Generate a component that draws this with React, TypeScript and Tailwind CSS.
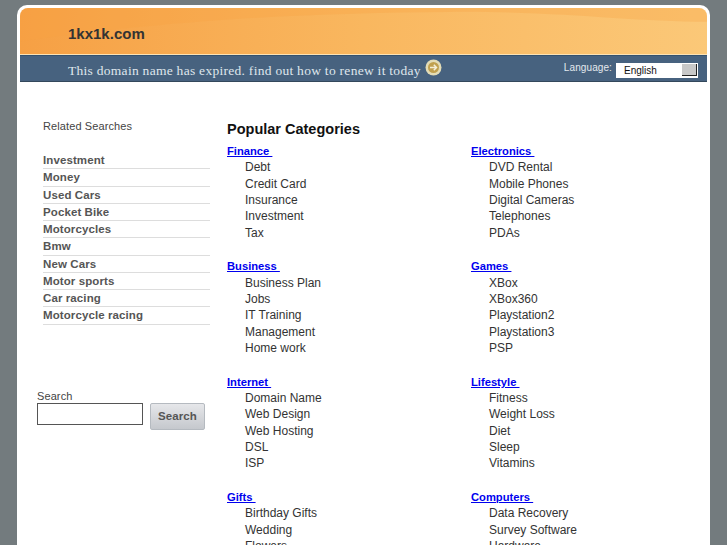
const related = [
  "Investment",
  "Money",
  "Used Cars",
  "Pocket Bike",
  "Motorcycles",
  "Bmw",
  "New Cars",
  "Motor sports",
  "Car racing",
  "Motorcycle racing",
];

const categories = [
  { title: "Finance", items: ["Debt", "Credit Card", "Insurance", "Investment", "Tax"] },
  { title: "Electronics", items: ["DVD Rental", "Mobile Phones", "Digital Cameras", "Telephones", "PDAs"] },
  { title: "Business", items: ["Business Plan", "Jobs", "IT Training", "Management", "Home work"] },
  { title: "Games", items: ["XBox", "XBox360", "Playstation2", "Playstation3", "PSP"] },
  { title: "Internet", items: ["Domain Name", "Web Design", "Web Hosting", "DSL", "ISP"] },
  { title: "Lifestyle", items: ["Fitness", "Weight Loss", "Diet", "Sleep", "Vitamins"] },
  { title: "Gifts", items: ["Birthday Gifts", "Wedding", "Flowers"] },
  { title: "Computers", items: ["Data Recovery", "Survey Software", "Hardware"] },
];

const Category = ({ title, items }: { title: string; items: string[] }) => (
  <div className="h-[115.4px]">
    <a href="#" className="block h-[16.2px] text-[11.2px] leading-[16.2px] font-bold text-[#0000ee] underline whitespace-pre">
      {title + " "}
    </a>
    <ul className="pl-[18px]">
      {items.map((item) => (
        <li key={item} className="h-[16.35px] text-[12px] leading-[16.35px] text-[#333]">
          {item}
        </li>
      ))}
    </ul>
  </div>
);

export default function App() {
  return (
    <div className="h-[545px] overflow-hidden bg-[#737b7e] pt-[5px] pl-[17px] font-['Liberation_Sans',Arial,sans-serif]">
      <div className="h-[560px] w-[693px] rounded-t-[10px] bg-white pt-[3px] px-[3px]">
        {/* header */}
        <div className="relative h-[47px] overflow-hidden rounded-t-[8px] border-b border-[#fde3b5] bg-gradient-to-r from-[#f6a044] via-[#f9b75f] to-[#fbc878]">
          <svg className="absolute inset-0 h-full w-full" viewBox="0 0 687 47" preserveAspectRatio="none">
            <path d="M0 0H687V14C610 14 540 3 430 4C300 5 170 10 0 34Z" fill="#f7a342" opacity="0.3" />
          </svg>
          <div className="relative pt-[16px] pl-[48px] text-[15px] leading-[20px] font-bold text-[#333]">1kx1k.com</div>
        </div>
        <div className="flex h-[27px] items-center justify-between border-t border-b border-t-[#34526f] border-b-[#33485c] bg-[#47627f] pl-[48px] pr-[9px]">
          <div className="flex items-center gap-[4px]">
            <span className="mt-[4px] font-['Liberation_Serif',serif] text-[13.5px] leading-[24px] tracking-[0.28px] text-[#dfe6ec]">
              This domain name has expired. find out how to renew it today
            </span>
            <svg width="17" height="17" viewBox="0 0 17 17" className="mt-[-3px]">
              <circle cx="8.5" cy="8.5" r="8" fill="#e3dcb6" />
              <circle cx="8.5" cy="8.5" r="5.5" fill="#c0a04f" />
              <path d="M5 8.5H11.5M8.8 5.8L11.5 8.5L8.8 11.2" fill="none" stroke="#f5efd8" strokeWidth="1.5" />
            </svg>
          </div>
          <div className="flex items-center gap-[4px]">
            <span className="mt-[-2px] text-[10px] tracking-[0.1px] text-[#e4e9ee]">Language:</span>
            <div className="mt-[3px] flex h-[15px] w-[82px] items-center justify-between bg-white pl-[8px] pr-[1px] text-[10px] text-[#111]">
              English
              <span className="h-[12px] w-[15px] border-r border-b border-r-[#222] border-b-[#222] bg-[#c8c8c8]" />
            </div>
          </div>
        </div>

        {/* body */}
        <div className="flex">
          <aside className="flex w-[207px] shrink-0 flex-col pl-[17px]">
            <div className="mt-[37px] pl-[6px] text-[11px] leading-[14px] tracking-[0.1px] text-[#444]">Related Searches</div>
            <ul className="mt-[19.2px] ml-[6px] w-[167px]">
              {related.map((item) => (
                <li key={item} className="h-[17.25px] border-b border-[#ddd] text-[11.5px] leading-[16px] font-bold tracking-[0.1px] text-[#555]">
                  {item}
                </li>
              ))}
            </ul>
            <div className="mt-[64.3px] text-[11px] leading-[14px] tracking-[0.1px] text-[#444]">Search</div>
            <div className="flex items-start gap-[7px]">
              <input className="h-[22px] w-[106px] border border-[#555] bg-white" aria-label="Search" />
              <button type="button" className="h-[27px] w-[55px] rounded-[2px] border border-[#b5bac0] bg-gradient-to-b from-[#e6e7ea] to-[#c5c8cd] text-[11.5px] font-bold tracking-[0.1px] text-[#555]">
                Search
              </button>
            </div>
          </aside>
          <main className="flex-1">
            <h1 className="mt-[38px] text-[14.5px] leading-[18px] font-bold text-[#111]">Popular Categories</h1>
            <div className="mt-[5px] grid grid-cols-[244px_1fr]">
              {categories.map((c) => (
                <Category key={c.title} title={c.title} items={c.items} />
              ))}
            </div>
          </main>
        </div>
      </div>
    </div>
  );
}
